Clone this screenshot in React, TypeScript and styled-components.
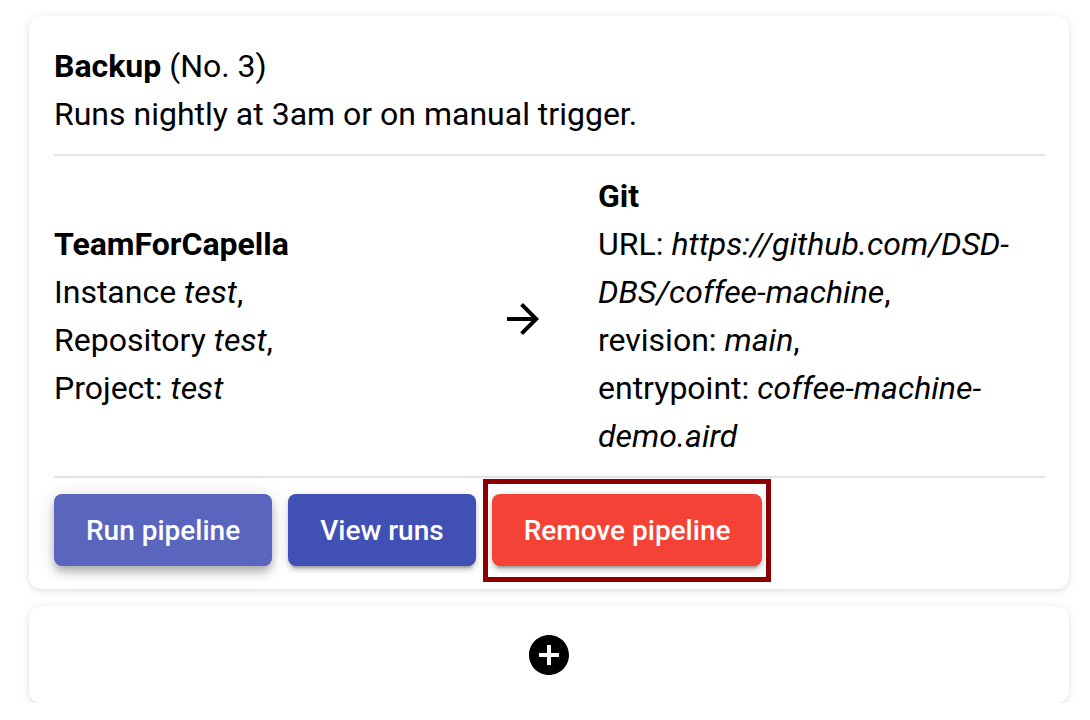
import React from 'react';
import styled, { createGlobalStyle } from 'styled-components';

const GlobalStyle = createGlobalStyle`
  body {
    margin: 0;
    background: #ffffff;
    font-family: Roboto, "Liberation Sans", sans-serif;
    color: #000;
  }
`;

const Page = styled.div`
  display: flex;
  flex-direction: column;
  gap: 17px;
  padding: 16px 21px 0 29px;
`;

const Card = styled.div<{ $center?: boolean }>`
  background: #fff;
  border-radius: 12px;
  box-shadow: 0 2px 10px rgba(0, 0, 0, 0.1), 0 1px 3px rgba(0, 0, 0, 0.06);
  padding: ${p => (p.$center ? '25px 24px 24px' : '26px 24px 23px 25px')};
  display: ${p => (p.$center ? 'flex' : 'block')};
  justify-content: center;
`;

const Text = styled.div`
  font-size: 32px;
  line-height: 48px;
`;

const Strong = styled.b`
  font-weight: 700;
`;

const Divider = styled.hr`
  border: none;
  height: 2px;
  background: #e3e3e7;
  margin: 16px 0;
`;

const Flow = styled.div`
  display: grid;
  grid-template-columns: 445px 99px 1fr;
  align-items: center;
`;

const ArrowBox = styled.div`
  width: 48px;
  height: 48px;
  margin-top: 6px;
  svg {
    display: block;
  }
`;

const Actions = styled.div`
  display: flex;
  gap: 16px;
  align-items: center;
`;

const Button = styled.button<{ $color: string; $raised?: boolean; $marked?: boolean }>`
  position: relative;
  height: 72px;
  padding: 0 32px;
  border: none;
  border-radius: 8px;
  background: ${p => p.$color};
  color: #fff;
  font-family: Roboto, "Liberation Sans", sans-serif;
  font-size: 28px;
  font-weight: 500;
  letter-spacing: 0;
  cursor: pointer;
  box-shadow: ${p =>
    p.$raised
      ? '0 4px 8px -2px rgba(0,0,0,0.2), 0 8px 10px rgba(0,0,0,0.14), 0 2px 20px rgba(0,0,0,0.12)'
      : '0 6px 2px -4px rgba(0,0,0,0.2), 0 4px 4px rgba(0,0,0,0.14), 0 2px 10px rgba(0,0,0,0.12)'};

  &::after {
    content: '';
    display: ${p => (p.$marked ? 'block' : 'none')};
    position: absolute;
    top: -15px;
    bottom: -16px;
    left: -9px;
    right: -9px;
    border: 5px solid #8e0000;
    pointer-events: none;
  }
`;

const AddBox = styled.div`
  width: 48px;
  height: 48px;
  svg {
    display: block;
  }
`;

export default function App() {
  return (
    <>
      <GlobalStyle />
      <Page>
        <Card>
          <Text>
            <Strong>Backup</Strong> (No. 3)
          </Text>
          <Text>Runs nightly at 3am or on manual trigger.</Text>
          <Divider />
          <Flow>
            <Text>
              <Strong>TeamForCapella</Strong>
              <br />
              Instance <i>test</i>,
              <br />
              Repository <i>test</i>,
              <br />
              Project: <i>test</i>
            </Text>
            <ArrowBox>
              <svg width="48" height="48" viewBox="0 0 24 24">
                <path d="M12 4l-1.41 1.41L16.17 11H4v2h12.17l-5.58 5.59L12 20l8-8z" fill="#000" />
              </svg>
            </ArrowBox>
            <Text>
              <Strong>Git</Strong>
              <br />
              URL: <i>https://github.com/DSD-DBS/coffee-machine</i>,
              <br />
              revision: <i>main</i>,
              <br />
              entrypoint: <i>coffee-machine-demo.aird</i>
            </Text>
          </Flow>
          <Divider />
          <Actions>
            <Button $color="#5a65be" $raised>
              Run pipeline
            </Button>
            <Button $color="#4050b5">View runs</Button>
            <Button $color="#f44336" $marked>
              Remove pipeline
            </Button>
          </Actions>
        </Card>
        <Card $center>
          <AddBox>
            <svg width="48" height="48" viewBox="0 0 24 24">
              <path
                d="M12 2C6.48 2 2 6.48 2 12s4.48 10 10 10 10-4.48 10-10S17.52 2 12 2zm5 11h-4v4h-2v-4H7v-2h4V7h2v4h4v2z"
                fill="#000"
              />
            </svg>
          </AddBox>
        </Card>
      </Page>
    </>
  );
}
